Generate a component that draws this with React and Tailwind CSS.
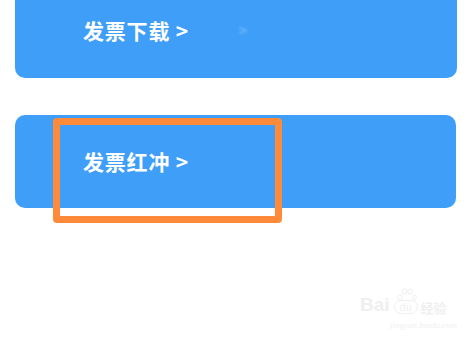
import React from "react";

export default function App() {
  const font = { fontFamily: '"Noto Sans CJK SC", "Noto Sans", sans-serif' };
  return (
    <div className="relative w-[476px] h-[338px] bg-white overflow-hidden" style={font}>
      <div className="ml-[15px] w-[442px] h-[78px] bg-[#3f9ff8] rounded-b-[10px] flex items-center pl-[68px] pb-[18px]">
        <span className="text-white font-bold text-[21px] leading-none tracking-[0.8px]">发票下载 &gt;</span>
        <span className="ml-[50px] text-[#8ec6fb] opacity-60 text-[14px] font-bold blur-[1px]">&gt;</span>
      </div>
      <div className="mt-[37px] ml-[15px] w-[441px] h-[93px] bg-[#3f9ff8] rounded-[10px] flex items-center pl-[68px]">
        <span className="text-white font-bold text-[21px] leading-none tracking-[0.8px]">发票红冲 &gt;</span>
      </div>
      <div className="absolute left-[53px] top-[118px] w-[229px] h-[105px] border-[7px] border-[#ff8a3a] rounded-[4px]" />
      <div className="absolute left-[360px] top-[295px] flex flex-col items-start text-[#efefef]">
        <div className="relative flex items-end">
          <span className="text-[19px] font-bold leading-none" style={{ fontFamily: '"Liberation Sans", sans-serif' }}>Bai</span>
          <span className="relative ml-[4px] w-[24px] h-[14px] rounded-full border border-[#efefef] text-[10px] leading-none flex items-center justify-center">du
            <svg className="absolute left-[2px] -top-[13px]" width="20" height="13" viewBox="0 0 20 13">
              <ellipse cx="3" cy="9.5" rx="2.2" ry="2.7" fill="none" stroke="#efefef" strokeWidth="1" />
              <ellipse cx="7.5" cy="3.5" rx="2.2" ry="2.7" fill="none" stroke="#efefef" strokeWidth="1" />
              <ellipse cx="13" cy="3.5" rx="2.2" ry="2.7" fill="none" stroke="#efefef" strokeWidth="1" />
              <ellipse cx="17.5" cy="9.5" rx="1.8" ry="2.5" fill="none" stroke="#efefef" strokeWidth="1" />
            </svg>
          </span>
          <span className="ml-[3px] text-[13px] font-bold leading-none">经验</span>
        </div>
        <span className="mt-[7px] ml-[30px] text-[9px] italic leading-none" style={{ fontFamily: '"Liberation Serif", serif' }}>jingyan.baidu.com</span>
      </div>
    </div>
  );
}
